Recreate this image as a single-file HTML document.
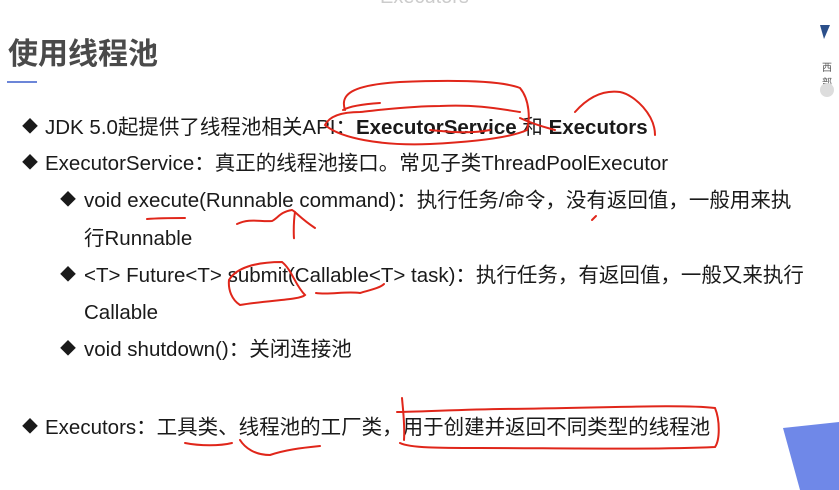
<!DOCTYPE html>
<html><head><meta charset="utf-8"><style>
body{margin:0;width:839px;height:490px;background:#fff;position:relative;overflow:hidden;font-family:"Liberation Sans","Noto Sans CJK SC",sans-serif;color:#1a1a1a}
.t{position:absolute;white-space:nowrap;font-size:20.5px;line-height:22px}
.b{position:absolute;font-size:16px;line-height:22px}
</style></head><body>
<div class="t" style="left:380px;top:-14px;color:#ccc;font-size:20px">Executors</div>
<div style="position:absolute;left:8px;top:33px;font-size:30px;font-weight:bold;color:#4a4a4a;font-family:'Noto Sans CJK SC',sans-serif;line-height:36px">使用线程池</div>
<div style="position:absolute;left:7px;top:81px;width:30px;height:2px;background:#6c86d8"></div>
<div style="position:absolute;left:810px;top:25px;width:29px;height:80px">
<div style="position:absolute;left:10px;top:0;width:0;height:0;border-left:4px solid transparent;border-right:6px solid transparent;border-top:14px solid #2b4f8a"></div>
<div style="position:absolute;left:12px;top:34px;font-size:10px;color:#555">西部</div>
<div style="position:absolute;left:10px;top:58px;width:14px;height:14px;border-radius:50%;background:#ddd"></div>
</div>
<svg style="position:absolute;left:0;top:0" width="839" height="490"><polygon points="783,428 839,422 839,490 800,490" fill="#6f88e8"/></svg>

<span class="b" style="left:22px;top:117px">◆</span><div class="t" style="left:45px;top:117px">JDK 5.0起提供了线程池相关API：<b>ExecutorService</b> 和 <b>Executors</b></div>
<span class="b" style="left:22px;top:153px">◆</span><div class="t" style="left:45px;top:153px">ExecutorService：真正的线程池接口。常见子类ThreadPoolExecutor</div>
<span class="b" style="left:60px;top:190px">◆</span><div class="t" style="left:84px;top:190px">void execute(Runnable command)：执行任务/命令，没有返回值，一般用来执</div>
<div class="t" style="left:84px;top:228px">行Runnable</div>
<span class="b" style="left:60px;top:265px">◆</span><div class="t" style="left:84px;top:265px">&lt;T&gt; Future&lt;T&gt; submit(Callable&lt;T&gt; task)：执行任务，有返回值，一般又来执行</div>
<div class="t" style="left:84px;top:302px">Callable</div>
<span class="b" style="left:60px;top:339px">◆</span><div class="t" style="left:84px;top:339px">void shutdown()：关闭连接池</div>
<span class="b" style="left:22px;top:417px">◆</span><div class="t" style="left:45px;top:417px">Executors：工具类、线程池的工厂类，用于创建并返回不同类型的线程池</div>

<svg style="position:absolute;left:0;top:0" width="839" height="490" fill="none" stroke="#e0261a" stroke-width="2" stroke-linecap="round">
<path d="M345,110 C340,95 350,85 400,82 C450,80 500,80 520,88 C530,100 530,120 527,130 C510,138 470,142 430,144 C380,146 340,138 325,125 C330,115 345,112 360,112 C380,110 410,106 440,106 C480,104 505,110 520,112"/>
<path d="M343,110 C350,106 365,104 380,103"/>
<path d="M575,112 C590,95 605,90 620,92 C635,95 655,115 655,135"/>
<path d="M520,118 C535,125 548,128 555,130"/>
<path d="M430,130 C450,132 470,134 490,130"/>
<path d="M147,219 C160,218 175,218 185,218"/>
<path d="M237,224 C250,218 260,222 272,221 C278,218 280,212 292,210 C296,212 300,218 315,228"/>
<path d="M295,212 C293,225 294,240 294,238"/>
<path d="M229,280 C236,268 255,262 282,262 C292,270 295,285 305,295 C300,300 270,300 240,305 C232,300 228,290 229,280"/>
<path d="M316,293 C330,295 345,291 360,293 C370,290 380,288 384,284"/>
<path d="M592,220 l4,-4"/>
<path d="M402,398 C403,410 405,425 404,440"/>
<path d="M397,412 C410,412 450,410 500,409 C600,408 680,404 715,408 C720,420 720,440 715,447 C650,450 550,448 480,448 C440,448 410,448 400,443"/>
<path d="M185,443 C200,446 220,446 232,443"/>
<path d="M240,440 C245,448 255,455 270,455 C285,450 300,448 320,446"/>
</svg>
</body></html>
